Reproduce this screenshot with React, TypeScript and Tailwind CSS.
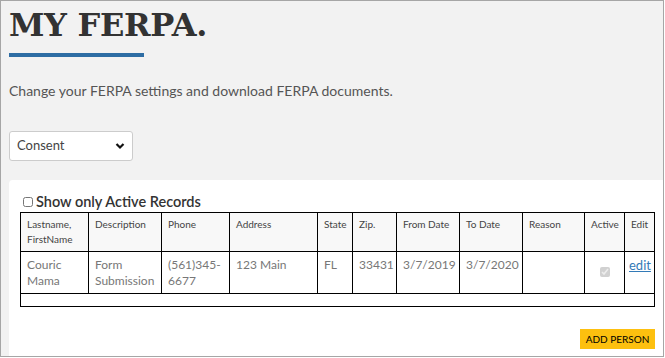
import React, { useState } from 'react';

const cols = [
  { label: 'Lastname, FirstName', w: 'w-[68px]' },
  { label: 'Description', w: 'w-[73px]' },
  { label: 'Phone', w: 'w-[68px]' },
  { label: 'Address', w: 'w-[88px]' },
  { label: 'State', w: 'w-[35px]' },
  { label: 'Zip.', w: 'w-[44px]' },
  { label: 'From Date', w: 'w-[63px]' },
  { label: 'To Date', w: 'w-[63px]' },
  { label: 'Reason', w: 'w-[62px]' },
  { label: 'Active', w: 'w-[40px]' },
  { label: 'Edit', w: 'w-[30px]' },
];

const row = ['Couric Mama', 'Form Submission', '(561)345-6677', '123 Main', 'FL', '33431', '3/7/2019', '3/7/2020', ''];

export default function App() {
  const [activeOnly, setActiveOnly] = useState(false);
  const [doc, setDoc] = useState('Consent');
  return (
    <div className="w-[664px] h-[357px] border border-[#a6a6a6] bg-[#f2f2f2] flex flex-col overflow-hidden font-['Lato','Liberation_Sans',sans-serif]">
      <div className="pl-[8px] pt-[8px]">
        <h1 className="text-[32px] leading-none font-bold text-[#333] font-['DejaVu_Serif','Liberation_Serif',serif] tracking-[-0.3px]">MY FERPA.</h1>
        <div className="mt-[12px] w-[135px] h-[4px] bg-[#2e6da4]"></div>
        <p className="mt-[25px] text-[14px] leading-[18px] text-[#555]">Change your FERPA settings and download FERPA documents.</p>
        <div className="mt-[31px] relative w-[124px] h-[30px]">
          <select
            className="appearance-none w-full h-full bg-white border border-[#ccc] rounded-[3px] pl-[7px] text-[13px] text-[#444] outline-none"
            value={doc}
            onChange={(e) => setDoc(e.target.value)}
          >
            <option>Consent</option>
            <option>Revocation</option>
          </select>
          <svg className="absolute right-[8px] top-[11px] pointer-events-none" width="10" height="8" viewBox="0 0 10 8">
            <path d="M1.5 2 L5 5.5 L8.5 2" fill="none" stroke="#111" strokeWidth="2.2" />
          </svg>
        </div>
      </div>
      <div className="mt-[19px] ml-[8px] flex-1 bg-white rounded-tl-[4px] pl-[11px] pr-[8px] pt-[13px]">
        <label className="flex items-center gap-[3px] text-[14.5px] leading-[18px] font-semibold text-[#333]">
          <input
            type="checkbox"
            className="w-[10px] h-[10px] m-0 ml-[3px] accent-[#555]"
            checked={activeOnly}
            onChange={(e) => setActiveOnly(e.target.checked)}
          />
          Show only Active Records
        </label>
        <table className="mt-[1px] w-[635px] table-fixed border-collapse border border-black">
          <thead>
            <tr className="bg-[#f8f8f8] h-[39px]">
              {cols.map((c) => (
                <th key={c.label} className={`${c.w} border border-black align-top text-left font-normal text-[10px] leading-[15px] text-[#444] px-[6px] pt-[4px]`}>
                  {c.label}
                </th>
              ))}
            </tr>
          </thead>
          <tbody>
            <tr className="h-[42px]">
              {row.map((v, i) => (
                <td key={i} className="border border-black align-top text-[12px] leading-[16px] text-[#777] px-[6px] pt-[5px]">
                  {v}
                </td>
              ))}
              <td className="border border-black align-top text-center pt-[7px]">
                <input type="checkbox" checked disabled readOnly className="w-[10px] h-[10px] m-0" />
              </td>
              <td className="border border-black align-top text-[13px] leading-[16px] px-[4px] pt-[5px]">
                <a href="#" className="text-[#337ab7] underline">edit</a>
              </td>
            </tr>
            <tr className="h-[13px]">
              <td colSpan={11} className="border border-black"></td>
            </tr>
          </tbody>
        </table>
        <div className="flex justify-end mt-[22px]">
          <button className="w-[75px] h-[20px] bg-[#fdc00f] text-[10px] text-black uppercase">Add Person</button>
        </div>
      </div>
    </div>
  );
}
